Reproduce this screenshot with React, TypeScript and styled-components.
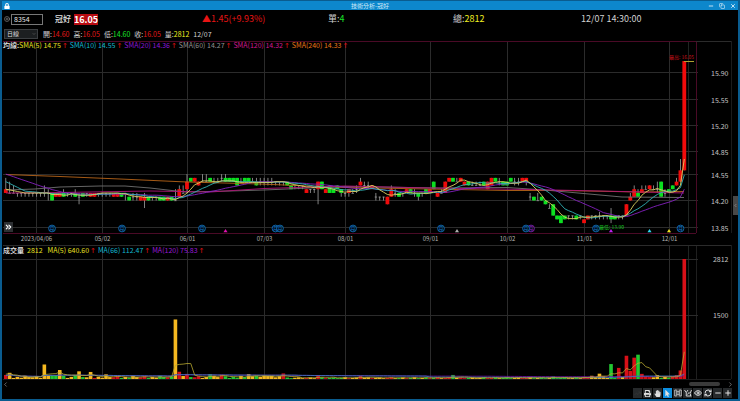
import React from "react";
import styled, { createGlobalStyle } from "styled-components";
import { FaHandPaper, FaLock, FaMousePointer, FaPrint } from "react-icons/fa";
import {
  ChevronDown,
  ChevronLeft,
  ChevronRight,
  ChevronsRight,
  CirclePlus,
  Copy,
  Eye,
  Minus,
  Plus,
  RefreshCw,
  TrendingUp,
  X,
} from "lucide-react";

const FONT = '"Noto Sans CJK TC", "Noto Sans", sans-serif';

const GlobalStyle = createGlobalStyle`
  * { box-sizing: border-box; }
  body { margin: 0; background: #000; font-family: ${FONT}; }
  button, input, select { font-family: inherit; }
`;

/* ---------- window frame ---------- */

const Window = styled.main`
  position: relative;
  border: 2px solid #0a5c8f;
  border-top: 1px solid #0a5c8f;
  background: #000;
  color: #d0d0d0;
`;

const TitleBar = styled.header`
  display: grid;
  grid-template-columns: 1fr auto 1fr;
  align-items: center;
  height: 9px;
  padding: 0 2px;
  background: #0d87cc;
  color: #fff;
`;

const Title = styled.h1`
  margin: 0;
  font-size: 6px;
  line-height: 9px;
  font-weight: 400;
  color: #cfeaf8;
`;

const WindowButtons = styled.div`
  display: flex;
  justify-content: flex-end;
  gap: 5px;
`;

const IconButton = styled.button`
  display: flex;
  align-items: center;
  justify-content: center;
  padding: 0;
  border: 0;
  background: none;
  color: inherit;
`;

/* ---------- quote rows ---------- */

const QuoteRow = styled.section`
  display: grid;
  grid-template-columns: 200fr 126fr 125fr 128fr 157fr;
  align-items: center;
  height: 18px;
  font-size: 9px;
  line-height: 12px;
  white-space: nowrap;
`;

const SymbolGroup = styled.div`
  display: flex;
  align-items: center;
  padding-left: 2px;
`;

const CodeInput = styled.input`
  width: 32px;
  height: 11px;
  margin-left: 1px;
  padding: 0 2px;
  border: 1px solid #777;
  background: #000;
  color: #e6e6e6;
  font-size: 7px;
  line-height: 9px;
`;

const StockName = styled.strong`
  margin-left: 12px;
  font-size: 8px;
  font-weight: 500;
  color: #e0e0e0;
`;

const PriceBadge = styled.strong`
  margin-left: 3px;
  background: #b80c12;
  color: #fff;
  line-height: 11px;
  font-weight: 700;
`;

const Value = styled.span<{ $color: string }>`
  color: ${(p) => p.$color};
`;

const DetailRow = styled.section`
  display: flex;
  align-items: center;
  gap: 4px;
  height: 12px;
  padding-left: 2px;
  font-size: 7px;
  line-height: 10px;
  white-space: nowrap;
`;

const SelectBox = styled.div`
  display: grid;
  grid-template: 10px / 34px;
  align-items: center;
  margin-right: 1px;
  color: #777;

  > * { grid-area: 1 / 1; }
  > svg { justify-self: end; margin-right: 2px; pointer-events: none; }
`;

const PeriodSelect = styled.select`
  appearance: none;
  width: 100%;
  height: 10px;
  padding: 0 2px;
  border: 1px solid #3c3f42;
  border-radius: 0;
  background: #1c1f21;
  color: #ddd;
  font-size: 6px;
  line-height: 8px;
`;

/* ---------- chart panels ---------- */

const Panel = styled.section`
  position: relative;
`;

const Legend = styled.div`
  position: absolute;
  top: 0;
  left: 1px;
  display: flex;
  gap: 2px;
  font-size: 7px;
  line-height: 10px;
  white-space: nowrap;
`;

const LegendTitle = styled.b<{ $tight?: boolean }>`
  margin-right: ${(p) => (p.$tight ? "-2px" : "0")};
  color: #e8e8e8;
  font-weight: 500;
`;

const LegendTotal = styled(Value)`
  margin: 0 3px 0 1px;
`;

const Up = styled.span`
  margin-left: 1px;
  color: #e01010;
  font-family: "DejaVu Sans", sans-serif;
`;

const Plot = styled.svg`
  display: block;
  width: 100%;
  height: auto;
`;

const ExpandButton = styled(IconButton)`
  position: absolute;
  left: 2px;
  bottom: 13px;
  width: 9px;
  height: 10px;
  background: #2d3033;
  color: #fff;
`;

const SideHandle = styled(IconButton)`
  position: absolute;
  right: 0;
  top: 49%;
  width: 5px;
  height: 19px;
  background: #484848;
  color: #ccc;
`;

/* ---------- bottom bars ---------- */

const ScrollRow = styled.div`
  display: flex;
  align-items: center;
  justify-content: space-between;
  height: 8px;
  padding-right: 4px;
  color: #aaa;
`;

const ScrollEnd = styled.div`
  display: flex;
  align-items: center;
  gap: 7px;
`;

const Thumb = styled.div`
  width: 31px;
  height: 4px;
  border-radius: 2px;
  background: #3a3a3a;
`;

const ToolBar = styled.nav`
  display: flex;
  justify-content: flex-end;
  gap: 1px;
  padding: 0 6px 1px 0;
`;

const Tool = styled(IconButton)<{ $active?: boolean; $dim?: boolean }>`
  width: 9px;
  height: 10px;
  background: ${(p) => (p.$active ? "#0d8fe0" : "#26292b")};
  color: ${(p) => (p.$dim ? "#3c3c3c" : "#e0e0e0")};
`;

/* ---------- data ---------- */

type Kind = "r" | "g" | "w";
interface Candle {
  kind: Kind;
  bottom: number;
  top: number;
  low: number;
  high: number;
}

// kind, body bottom, body top, [low, high] in steps of 0.05 around 14.20; "*n" repeats.
const SERIES = `
r 2 3 2 6|w 2 2 2 5|w 2 2 2 4|w 2 2 1 2*7|w 2 2 1 4|w 2 2 0 3|g 0 2|r 1 2*2|g 1 2 1 3|w 2 2 1 2*2|g 1 2 1 3|w 1 1 -1 2|g 1 2|w 2 2 1 2
r 1 2*2|w 2 2 1 2*4|r 1 2*2|g 1 2|w 2 2 0 2|g 0 1|w 1 1 0 2*2|r 0 1|r 0 1 -2 2|g 0 1|w 1 1 0 1*2|g 0 1*2|r 0 1|g 0 1|w 0 0 0 3
r 1 3 1 4|w 2 2 2 4|r 3 5 2 7|g 5 6|r 5 6|r 4 5|w 5 5 5 7*2|g 5 6|w 5 5 5 6*2|w 6 6 5 7|g 5 6 5 7|g 5 6*2|g 4 6|w 5 5 5 6|g 5 6*2
w 5 5 5 6|g 4 5 4 6|w 5 5 4 6*4|w 5 5 4 5*3|g 4 5|g 3 4|w 4 4 3 4*3|r 2 3|w 3 3 2 3*2|r 3 5 -1 5|g 3 5|r 2 3|g 2 4|g 2 3|g 3 4
g 2 3 1 3|w 2 2 1 2|r 2 3 1 3|w 2 2 2 3|w 3 3 2 4|r 4 5 4 6|w 4 4 3 5*2|r 3 4|w 1 1 0 2|w 1 1 0 1*2|r -1 1|r 1 3 1 4|w 2 2 1 3|g 1 2|w 2 2 1 2
r 2 3|g 2 3|w 2 2 1 3|g 1 2 0 2|w 2 2 1 2|g 2 3|r 2 3|g 3 5|r 1 2|w 2 2 2 3|r 2 5|r 5 6|g 5 6|w 5 5 5 6|r 5 6|r 4 5|g 4 5|w 4 4 4 5*3|g 4 5
r 3 5|r 4 6|g 5 6|w 5 5 4 6|g 4 5*2|g 5 6|w 5 5 4 6*2|r 5 6|r 5 6 4 6|w 1 1 0 2|g 0 1|w 0 0 0 2|g 0 1|g -1 0|w -2 -2 -2 -1|g -4 -1|g -5 -4
g -6 -4|g -5 -4|w -4 -4 -5 -4*2|g -5 -4|w -4 -4 -5 -4|r -6 -5|r -5 -4|w -4 -4 -5 -4*2|w -4 -4 -5 -3|w -4 -4 -5 -4*2|g -5 -4 -6 -2|g -5 -4
w -4 -4 -5 -4*2|r -4 -1|r 0 1 0 2|r 1 3 1 4|g 1 2 1 3|r 2 3 2 4|w 3 3 3 4|r 3 4|w 3 3 3 4|w 3 3 2 5|g 1 5|w 2 2 1 3|g 2 3|g 3 4|r 4 5 4 6|r 5 8 5 11|r 8 37`;

const candles: Candle[] = SERIES.trim()
  .split(/[|\n]/)
  .flatMap((entry) => {
    const [body, times] = entry.split("*");
    const [kind, ...n] = body.split(" ");
    const [bottom, top, low = bottom, high = top] = n.map(Number);
    return Array.from({ length: times ? Number(times) : 1 }, () => ({
      kind: kind as Kind,
      bottom,
      top,
      low,
      high,
    }));
  });

const x = (i: number) => 5.8 + 3.855 * i;
const y = (step: number) => 200.5 - 3.77 * step;

const closes = candles.map((c) => (c.kind === "r" ? c.top : c.bottom));
const before = [...Array(10).fill(9), ...Array(5).fill(7), ...Array(4).fill(3)];

function average(values: number[], history: number[], n: number) {
  const all = [...history, ...values];
  return values.map((_, i) => {
    const end = i + history.length + 1;
    const part = all.slice(Math.max(0, end - n), end);
    return part.reduce((a, b) => a + b, 0) / part.length;
  });
}

const toPoints = (values: number[], fy: (v: number) => number) =>
  values.map((v, i) => `${x(i).toFixed(1)},${fy(v).toFixed(1)}`).join(" ");

const candleColor: Record<Kind, string> = { r: "#f00b0b", g: "#0be020", w: "#b4b4b4" };

const notableVolumes: Record<number, [string, number]> = {
  0: ["r", 95], 1: ["w", 145], 10: ["w", 340], 11: ["w", 90], 12: ["g", 90], 13: ["g", 90],
  14: ["w", 210], 15: ["g", 80], 18: ["g", 95], 19: ["w", 180], 22: ["w", 165], 26: ["w", 110],
  44: ["w", 1395], 45: ["r", 170], 46: ["w", 70], 47: ["r", 120], 53: ["g", 115], 56: ["r", 100],
  63: ["w", 115], 65: ["g", 70], 67: ["w", 75], 69: ["w", 75], 72: ["r", 130], 81: ["r", 90],
  92: ["r", 70], 116: ["g", 95], 142: ["g", 60], 154: ["w", 125], 157: ["g", 350],
  159: ["r", 260], 161: ["r", 545], 162: ["r", 190], 163: ["r", 500], 164: ["g", 570],
  165: ["r", 120], 166: ["r", 60], 169: ["w", 90], 173: ["r", 60], 174: ["r", 90],
  175: ["r", 200], 176: ["r", 2812],
};
const busy = [40, 65, 25, 50, 30, 75, 45];
const quiet = [25, 35, 20, 30, 40, 20];
const volumes = candles.map((c, i) => {
  const note = notableVolumes[i];
  const calm = i > 72 && i < 150;
  return {
    kind: (note ? note[0] : c.kind) as Kind,
    value: note ? note[1] : calm ? quiet[i % 6] : busy[i % 7],
  };
});
const volumeColor: Record<Kind, string> = { r: "#d81018", g: "#22c832", w: "#f5b820" };
const vy = (v: number) => 379 - (v * 120) / 2812;
const volumeValues = volumes.map((v) => v.value);

const months: [number, string][] = [
  [36.5, "2023/04/06"], [102.5, "05/02"], [187.5, "06/01"], [264.5, "07/03"], [345.5, "08/01"],
  [430.5, "09/01"], [507.5, "10/02"], [584.5, "11/01"], [669.5, "12/01"],
];
const prices: [number, string][] = [
  [72.5, "15.90"], [99.5, "15.55"], [125.5, "15.20"], [151.5, "14.85"], [174.5, "14.55"],
  [200.5, "14.20"], [227.5, "13.85"],
];
const events: [number, string][] = [
  [52, "#1279c8"], [122, "#1279c8"], [202, "#1279c8"], [275.5, "#1279c8"], [280, "#1279c8"],
  [353, "#1279c8"], [441, "#1279c8"], [531, "#8a22c0"], [526, "#1279c8"], [596, "#1279c8"],
  [680.5, "#1279c8"],
];
const triangles: [number, string][] = [
  [225.5, "#e010b0"], [457, "#b0b0b0"], [611, "#c020f0"], [649.5, "#30d8f0"], [669, "#f0e020"],
];

const averages = [
  ["SMA(5) 14.75", "#e8e020"],
  ["SMA(10) 14.55", "#12b8d0"],
  ["SMA(20) 14.36", "#8a18d8"],
  ["SMA(60) 14.27", "#909090"],
  ["SMA(120) 14.32", "#d01890"],
  ["SMA(240) 14.33", "#e87818"],
];
const volumeAverages = [
  ["MA(5) 640.60", "#e8e020"],
  ["MA(66) 112.47", "#12b8d0"],
  ["MA(120) 75.83", "#9a18d8"],
];

/* ---------- drawings ---------- */

function VerticalGrid({ top, bottom }: { top: number; bottom: number }) {
  return (
    <g stroke="#2b2b2b">
      {months.map(([mx]) => (
        <line key={mx} x1={mx} x2={mx} y1={top} y2={bottom} />
      ))}
      <line x1="688.5" x2="688.5" y1={top} y2={bottom} stroke="#1f2422" />
      <line x1="731.5" x2="731.5" y1={top} y2={bottom} stroke="#1c1c1c" />
    </g>
  );
}

function PriceChart() {
  return (
    <Plot viewBox="2 40 736 205" role="img" aria-label="日線">
      <VerticalGrid top={41} bottom={233} />
      <g stroke="#2b2b2b">
        {prices.map(([py]) => (
          <line key={py} x1="3" x2="698" y1={py} y2={py} />
        ))}
      </g>
      <path d="M3 41.5H696M3 233.5H696M696.5 41V233" stroke="#4a0a26" fill="none" />
      <path d="M696 41.5H731" stroke="#2b2b2b" />
      <g fontFamily={FONT} fontSize="7" fill="#c4c4c4" textAnchor="end">
        {prices.map(([py, label]) => (
          <text key={label} x="728.5" y={py + 3}>{label}</text>
        ))}
      </g>
      <g fontFamily={FONT} fontSize="6" fill="#b4b4b4" textAnchor="middle">
        {months.map(([mx, label]) => (
          <text key={label} x={mx} y="241">{label}</text>
        ))}
      </g>
      {candles.map((c, i) => (
        <g key={i} fill={candleColor[c.kind]}>
          <rect x={x(i) - 0.4} width="0.8" y={y(c.high)} height={Math.max(1, (c.high - c.low) * 3.77)} fill="#a0a0a0" />
          <rect
            x={x(i) - (c.kind === "w" ? 1.2 : 1.9)}
            width={c.kind === "w" ? 2.4 : 3.8}
            y={y(c.top)}
            height={Math.max(0.6, (c.top - c.bottom) * 3.77)}
          />
        </g>
      ))}
      <g fill="none" strokeWidth="0.9" strokeLinejoin="round">
        <path d="M6 174.5L60 176.5L120 179L187 182L260 184L345 187.5L430 189L507 190.5L560 190.5L640 192L684 191.5" stroke="#b86418" />
        <path d="M6 190L35 189L60 187L100 186L125 186L150 188L185 192L230 191L264 190L345 186.5L440 188L507 187.5L545 190L600 195L622 197L684 197.5" stroke="#707070" />
        <path d="M6 193L60 192.5L150 191L210 192L264 188.5L345 186L430 188L530 189.5L600 191L684 193" stroke="#b01478" />
        <polyline points={toPoints(average(closes, before, 20), y)} stroke="#8420c0" />
        <polyline points={toPoints(average(closes, before, 10), y)} stroke="#30b4b8" />
        <polyline points={toPoints(average(closes, before, 5), y)} stroke="#dcd060" />
      </g>
      <path d="M684 61.5H694" stroke="#b0a030" />
      <g fontFamily={FONT} fontSize="5">
        <text x="669" y="59" fill="#c01018">最高: 16.05</text>
        <text x="599" y="229" fill="#18c020">最低: 13.90</text>
      </g>
      {events.map(([ex, color]) => (
        <g key={ex}>
          <circle cx={ex} cy="228.5" r="3.4" fill="#020c18" stroke={color} strokeWidth="0.8" />
          <text x={ex} y="230.3" fontFamily={FONT} fontSize="5" fill={color} textAnchor="middle">月</text>
        </g>
      ))}
      {triangles.map(([tx, color]) => (
        <path key={tx} d={`M${tx - 2} 232.3h4l-2-3.3z`} fill={color} />
      ))}
    </Plot>
  );
}

function VolumeChart() {
  return (
    <Plot viewBox="2 245 736 135" role="img" aria-label="成交量">
      <VerticalGrid top={245} bottom={379} />
      <path d="M696.5 245V379" stroke="#1f1f1f" />
      <path d="M3 245.5H731M3 259.5H698M3 315.5H698" stroke="#2b2b2b" />
      <path d="M3 379.5H731" stroke="#1c1c1c" />
      <g fontFamily={FONT} fontSize="7" fill="#c4c4c4" textAnchor="end">
        <text x="728.5" y="262">2812</text>
        <text x="728.5" y="318">1500</text>
      </g>
      {volumes.map((v, i) => (
        <rect key={i} x={x(i) - 1.8} width="3.6" y={vy(v.value)} height={379 - vy(v.value)} fill={volumeColor[v.kind]} />
      ))}
      <g fill="none" strokeWidth="0.8">
        <polyline points={toPoints(average(volumeValues, [60], 120), vy)} stroke="#7418a8" />
        <polyline points={toPoints(average(volumeValues, [60], 66), vy)} stroke="#3c80c0" />
        <polyline points={toPoints(average(volumeValues, [130], 5), vy)} stroke="#b8a830" />
      </g>
    </Plot>
  );
}

function InfoTableIcon() {
  return (
    <svg width="8" height="8" viewBox="0 0 16 16" fill="none" stroke="currentColor" strokeWidth="1.6">
      <path d="M4 2H1.5v12H4M12 2h2.500v12H12M5.500 1v14M10.500 1v14M5.500 5.500h5M5.500 10.500h5" />
    </svg>
  );
}

function DrawLineIcon() {
  return (
    <svg width="8" height="8" viewBox="0 0 16 16" fill="none" stroke="currentColor" strokeWidth="1.8">
      <path d="M1 2l3.500 5L8 2M4.500 7v7H15M7 11l3-4 2 2 3-7M13 10v4" />
    </svg>
  );
}

function AverageItems({ items }: { items: string[][] }) {
  return (
    <>
      {items.map(([label, color]) => (
        <Value key={label} $color={color}>
          {label}
          <Up>↑</Up>
        </Value>
      ))}
    </>
  );
}

const tools = [
  { label: "趨勢線", icon: <TrendingUp size={7} />, dim: true },
  { label: "列印", icon: <FaPrint size={7} /> },
  { label: "拖曳", icon: <FaHandPaper size={7} /> },
  { label: "選取", icon: <FaMousePointer size={7} />, active: true },
  { label: "資訊", icon: <InfoTableIcon /> },
  { label: "畫線", icon: <DrawLineIcon /> },
  { label: "顯示", icon: <Eye size={8} strokeWidth={3} /> },
  { label: "重新整理", icon: <RefreshCw size={8} strokeWidth={3} /> },
  { label: "縮小", icon: <Minus size={8} strokeWidth={3} /> },
  { label: "放大", icon: <Plus size={8} strokeWidth={3} /> },
];

const details = [
  ["開:", "14.60", "#e01818"],
  ["高:", "16.05", "#e01818"],
  ["低:", "14.60", "#18e028"],
  ["收:", "16.05", "#e01818"],
  ["量:", "2812", "#f0f020"],
];

export default function App() {
  return (
    <>
      <GlobalStyle />
      <Window>
        <TitleBar>
          <FaLock size={6} />
          <Title>技術分析-冠好</Title>
          <WindowButtons>
            <IconButton aria-label="最小化"><Minus size={6} strokeWidth={3} /></IconButton>
            <IconButton aria-label="還原"><Copy size={6} /></IconButton>
            <IconButton aria-label="關閉"><X size={6} strokeWidth={3} /></IconButton>
          </WindowButtons>
        </TitleBar>

        <QuoteRow>
          <SymbolGroup>
            <IconButton aria-label="加入"><CirclePlus size={6} color="#aaa" /></IconButton>
            <CodeInput aria-label="股票代號" defaultValue="8354" />
            <StockName>冠好</StockName>
            <PriceBadge>16.05</PriceBadge>
          </SymbolGroup>
          <Value $color="#e81414">▲1.45(+9.93%)</Value>
          <span>單:<Value $color="#18e028">4</Value></span>
          <span>總:<Value $color="#f0f020">2812</Value></span>
          <time>12/07 14:30:00</time>
        </QuoteRow>

        <DetailRow>
          <SelectBox>
            <PeriodSelect aria-label="週期" defaultValue="日線">
              <option>日線</option>
            </PeriodSelect>
            <ChevronDown size={4} strokeWidth={3} />
          </SelectBox>
          {details.map(([label, value, color]) => (
            <span key={label}>{label}<Value $color={color}>{value}</Value></span>
          ))}
          <span>12/07</span>
        </DetailRow>

        <Panel>
          <PriceChart />
          <Legend>
            <LegendTitle $tight>均線:</LegendTitle>
            <AverageItems items={averages} />
          </Legend>
          <ExpandButton aria-label="展開"><ChevronsRight size={10} strokeWidth={3} /></ExpandButton>
        </Panel>

        <Panel>
          <VolumeChart />
          <Legend>
            <LegendTitle>成交量</LegendTitle>
            <LegendTotal $color="#e8e020">2812</LegendTotal>
            <AverageItems items={volumeAverages} />
          </Legend>
        </Panel>

        <ScrollRow>
          <IconButton aria-label="向左"><ChevronLeft size={7} /></IconButton>
          <ScrollEnd>
            <Thumb />
            <IconButton aria-label="向右"><ChevronRight size={7} /></IconButton>
          </ScrollEnd>
        </ScrollRow>
        <ToolBar>
          {tools.map((t) => (
            <Tool key={t.label} aria-label={t.label} $active={t.active} $dim={t.dim}>{t.icon}</Tool>
          ))}
        </ToolBar>
        <SideHandle aria-label="收合"><ChevronLeft size={5} /></SideHandle>
      </Window>
    </>
  );
}
